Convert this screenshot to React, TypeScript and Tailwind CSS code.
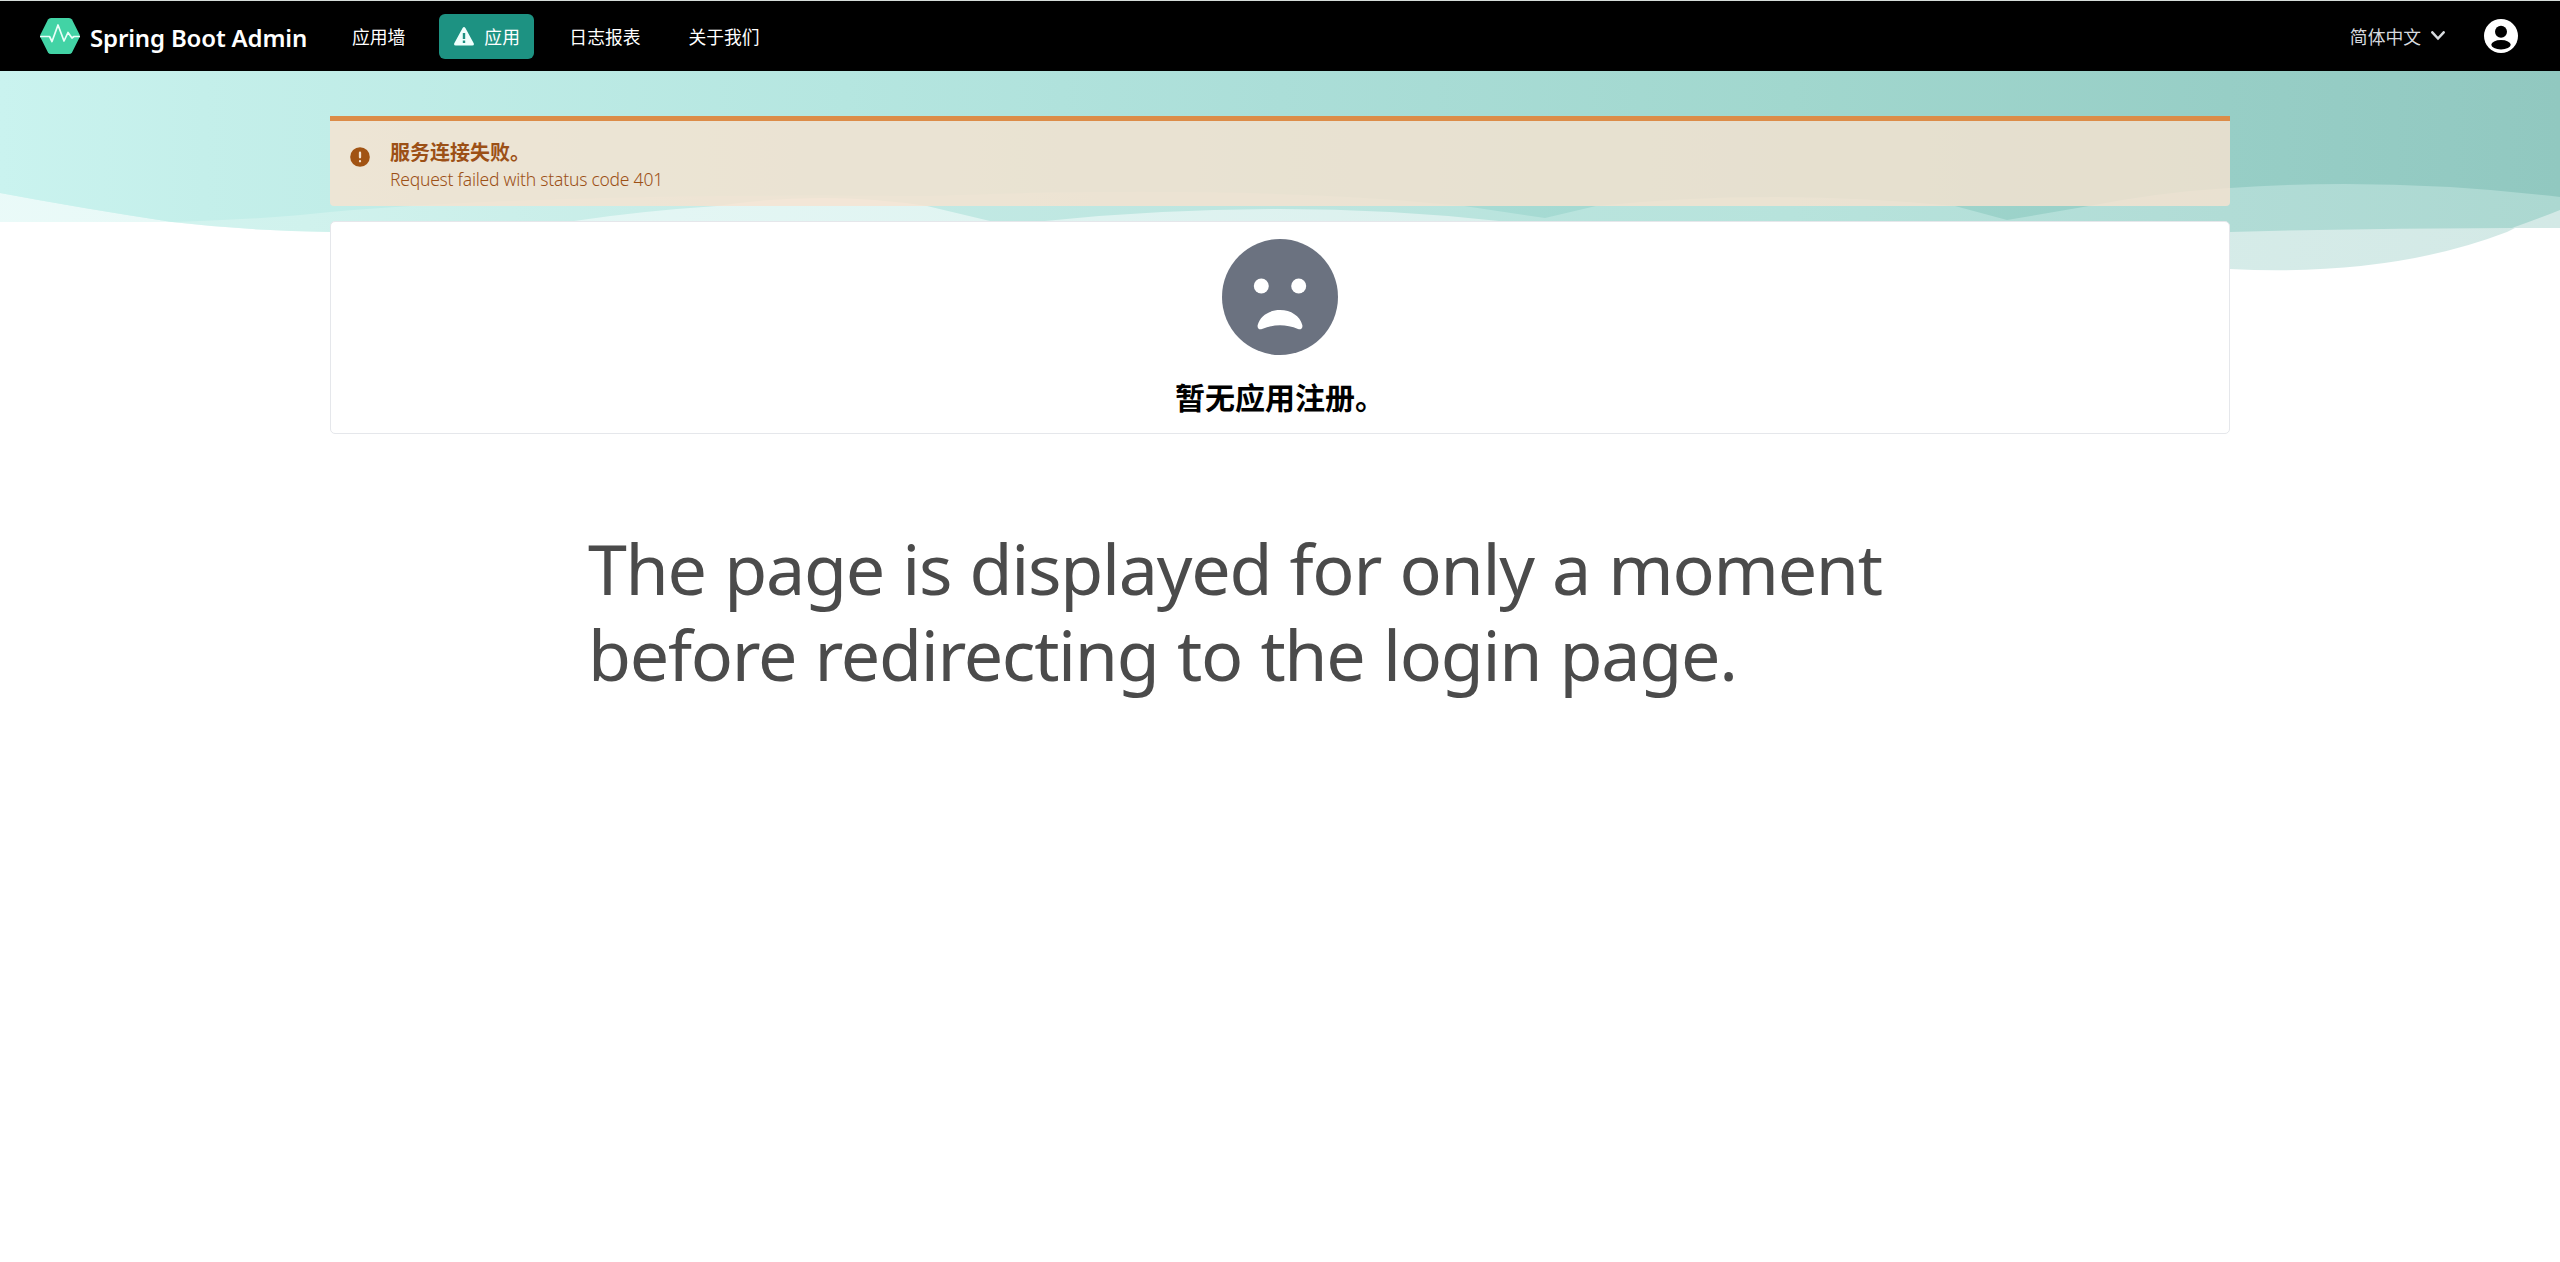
import React from "react";

const navItem = "flex h-[45px] items-center rounded-md text-[17.8px] font-normal text-white";

function Waves() {
  return (
    <svg className="absolute inset-x-0 top-[71px] h-[205px] w-full" viewBox="0 71 2560 205" preserveAspectRatio="none" aria-hidden="true">
      <defs>
        <linearGradient id="sea" gradientUnits="userSpaceOnUse" x1="0" y1="0" x2="2560" y2="0">
          <stop offset="0" stopColor="#caf3ef" />
          <stop offset="0.08" stopColor="#c4efea" />
          <stop offset="0.33" stopColor="#b5e6e0" />
          <stop offset="0.5" stopColor="#abded8" />
          <stop offset="0.7" stopColor="#a1d7ce" />
          <stop offset="0.87" stopColor="#97cec6" />
          <stop offset="1" stopColor="#91c8c0" />
        </linearGradient>
        <linearGradient id="swell" gradientUnits="userSpaceOnUse" x1="0" y1="0" x2="2560" y2="0">
          <stop offset="0" stopColor="#d5f5f1" />
          <stop offset="0.12" stopColor="#d0f2ed" />
          <stop offset="0.33" stopColor="#c3eae5" />
          <stop offset="0.5" stopColor="#bce5df" />
          <stop offset="0.7" stopColor="#b7e3dc" />
          <stop offset="0.87" stopColor="#b1dcd6" />
          <stop offset="1" stopColor="#acd8d1" />
        </linearGradient>
      </defs>
      <path
        fill="url(#sea)"
        fillOpacity="0.4"
        d="M0 71V222H172Q250 231 330 232L2230 269Q2390 277 2507 232L2515 228H2560V71Z"
      />
      <path
        fill="url(#swell)"
        d="M0 71V193Q80 208 172 222Q250 231 330 232L574 221Q640 211 717 206Q822 190 927 206L990 221H1045Q1160 209 1280 209Q1390 209 1499 221L2230 232Q2370 228 2512 228Q2538 219 2560 210V71Z"
      />
      <path
        fill="url(#sea)"
        d="M0 71V193Q80 208 172 222Q270 219 330 212Q540 193 927 196Q1250 184 1464 206L1545 218L1596 206Q1770 188 1955 206L2007 220L2089 206Q2160 192 2230 188Q2390 177 2560 197V71Z"
      />
    </svg>
  );
}

function Header() {
  return (
    <header className="relative flex h-[71px] items-center border-t border-[#d5dcd9] bg-black pl-10 pr-[42px]">
      <svg className="h-9 w-10 shrink-0" viewBox="0 0 40 36">
        <path d="M11 0H29Q31 0 32 1.6L39.500 16.500Q40 18 39.500 19.500L32 34.400Q31 36 29 36H11Q9 36 8 34.400L.5 19.500Q0 18 .5 16.500L8 1.600Q9 0 11 0Z" fill="#42d3a5" />
        <path d="M0 18.500H9.500L12 23.500L18 7L24 23L28 14.500L32 20L34 18.500H40" fill="none" stroke="#e9fff8" strokeWidth="1.700" strokeLinejoin="round" />
      </svg>
      <span className="ml-[10px] mt-1 w-[217px] whitespace-nowrap text-[24px] font-semibold leading-none tracking-[-0.15px] text-white">Spring Boot Admin</span>
      <nav className="ml-[30px] flex items-center">
        <a className={`${navItem} px-[15px] pt-[2px]`}>应用墙</a>
        <a className={`${navItem} ml-[19px] w-[95px] bg-[#1d9282] pl-[15px]`}>
          <svg className="mr-[10px] h-[19px] w-5" viewBox="0 0 20 19">
            <path fillRule="evenodd" fill="#effffc" d="M8.600 1Q10 -1 11.400 1L19.700 16.200Q20.600 18.300 18.200 18.500H1.800Q-.6 18.300.3 16.200ZM8.800 6V12H11.200V6ZM8.800 13.500V16H11.200V13.500Z" />
          </svg>
          <span className="pt-[2px]">应用</span>
        </a>
        <a className={`${navItem} ml-[20px] px-[15px] pt-[2px]`}>日志报表</a>
        <a className={`${navItem} ml-[18px] px-[15px] pt-[2px]`}>关于我们</a>
      </nav>
      <div className="ml-auto flex items-center">
        <span className="pt-[2px] text-[17.8px] font-normal text-[#d6d9de]">简体中文</span>
        <svg className="ml-[10px] h-[10px] w-[14px]" viewBox="0 0 14 10">
          <path d="M1.300 1.300L7 7.500L12.700 1.300" fill="none" stroke="#d8dbdf" strokeWidth="2.500" strokeLinecap="round" />
        </svg>
        <svg className="ml-[39px] h-[34px] w-[34px]" viewBox="0 0 34 34">
          <circle cx="17" cy="17" r="17" fill="#fff" />
          <circle cx="17" cy="12.800" r="6" fill="#000" />
          <ellipse cx="17" cy="25.800" rx="9.700" ry="4.700" fill="#000" />
        </svg>
      </div>
    </header>
  );
}

export default function App() {
  return (
    <div className="relative h-[1262px] w-[2560px] overflow-hidden bg-white font-['Noto_Sans','Noto_Sans_CJK_SC',sans-serif]">
      <Waves />
      <Header />
      <main className="relative mx-auto w-[1900px] pt-[45px]">
        <section className="flex h-[90px] rounded-b border-t-[5px] border-[#dc8c48] bg-[rgba(248,226,208,0.8)] pl-5">
          <svg className="mt-[26px] h-5 w-5" viewBox="0 0 20 20">
            <circle cx="10" cy="10" r="9.800" fill="#a15313" />
            <path d="M10 5.700V10.300M10 14.200V14.300" stroke="#f3e3d2" strokeWidth="2.300" strokeLinecap="round" />
          </svg>
          <div className="ml-5 mt-[18px] text-[#9c5016]">
            <h3 className="text-[20px] font-bold leading-[28px]">服务连接失败。</h3>
            <p className="text-[17.5px] font-light leading-[25px] tracking-[-0.23px]">Request failed with status code 401</p>
          </div>
        </section>
        <section className="mt-[15px] flex h-[213px] flex-col items-center rounded-[5px] border border-[#e5e7eb] bg-white pt-[17px]">
          <svg className="h-[116px] w-[116px]" viewBox="0 0 116 116">
            <circle cx="58" cy="58" r="58" fill="#6b7280" />
            <circle cx="39.300" cy="47" r="7.500" fill="#fff" />
            <circle cx="76.700" cy="47" r="7.500" fill="#fff" />
            <path d="M35.700 86C38 77 47 71 58 71S78 77 80.300 86C81 89 79 91 76 90C64 85 52 85 40 90C37 91 35 89 35.700 86Z" fill="#fff" />
          </svg>
          <h1 className="mt-[20px] text-[30px] font-bold leading-[45px] text-black">暂无应用注册。</h1>
        </section>
        <p className="ml-[258px] mt-[91px] w-[1400px] text-[70px] leading-[86px] tracking-[-1.3px] [word-spacing:1.5px] text-[#4b4b4b]">
          The page is displayed for only a moment
          <br />
          before redirecting to the login page.
        </p>
      </main>
    </div>
  );
}
